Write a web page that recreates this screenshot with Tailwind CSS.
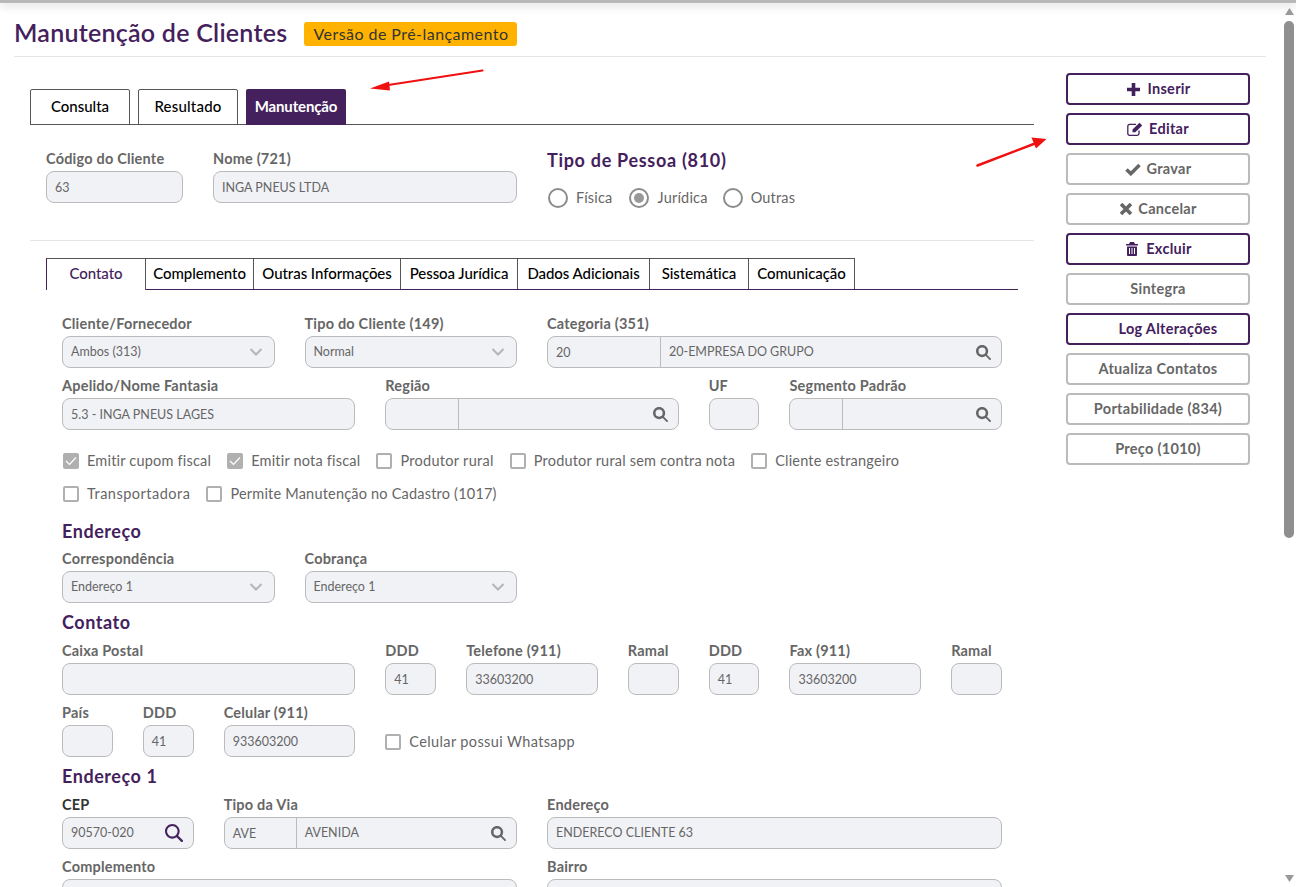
<!DOCTYPE html>
<html lang="pt-BR">
<head>
  <meta charset="UTF-8" />
  <meta name="viewport" content="width=device-width, initial-scale=1.0"/>
  <title>Manutenção de Clientes</title>
  <script src="https://cdn.jsdelivr.net/npm/@tailwindcss/browser@4"></script>
</head>
<body class="bg-white h-[887px] overflow-hidden flex relative [font-family:Lato,sans-serif] text-[#666]">

  <!-- top shadow -->
  <div class="absolute top-0 left-0 w-full h-[3px] bg-[#b8b8b8] shadow-[0_2px_10px_rgba(0,0,0,0.25)]"></div>

  <!-- annotation arrows -->
  <svg class="absolute top-0 left-0 pointer-events-none" width="1296" height="200" viewBox="0 0 1296 200">
    <path d="M482.500 70.500 L385 85.500" stroke="#f01010" stroke-width="2.200" stroke-linecap="round"/>
    <path d="M370 88.500 L389 81.500 L390 90.500 Z" fill="#f01010"/>
    <path d="M977.500 165.500 L1035 143.500" stroke="#f01010" stroke-width="2.500" stroke-linecap="round"/>
    <path d="M1046.500 139 L1031.500 137.500 L1036 148.500 Z" fill="#f01010"/>
  </svg>

  <div class="w-[1283px] shrink-0 pl-[14px] pr-[17px]">
    <!-- header -->
    <header class="h-[57px] border-b border-[#e4e4e4] flex items-center gap-[17px] pt-[10px]">
      <h1 class="text-[25px] leading-[32px] font-semibold text-[#44215c] tracking-[0.25px] -mt-[2px]">Manutenção de Clientes</h1>
      <span class="bg-[#ffb300] text-[#333] text-[16px] leading-[24px] h-[24px] w-[213px] mt-[2px] rounded-[3px] text-center tracking-[0.45px]">Versão de Pré-lançamento</span>
    </header>

    <div class="flex items-start">
      <!-- left column -->
      <div class="w-[1004px] ml-[16px] pt-[32px]">
        <nav class="flex gap-[8px] h-[36px] border-b border-[#555]">
          <a class="w-[100px] h-[36px] border border-[#555] rounded-t-[2px] flex items-center justify-center pb-[2px] text-[15px] font-medium text-black">Consulta</a>
          <a class="w-[100px] h-[36px] border border-[#555] rounded-t-[2px] flex items-center justify-center pb-[2px] text-[15px] font-medium text-black tracking-[0.2px]">Resultado</a>
          <a class="w-[100px] h-[36px] bg-[#44215c] rounded-t-[2px] flex items-center justify-center pb-[2px] text-[15px] font-bold text-white tracking-[-0.15px]">Manutenção</a>
        </nav>

        <section class="h-[116px] border-b border-[#e4e4e4] pl-[16px] pt-[23px] flex gap-[30px]">
          <div class="w-[137px]">
            <label class="block h-[20px] pt-[1px] leading-[20px] mb-[3px] text-[14.500px] font-bold tracking-[0.2px] whitespace-nowrap">Código do Cliente</label>
            <div class="h-[32px] border border-[#bbb] rounded-[8px] bg-[#f1f2f6] px-[8px] text-[12.500px] leading-[31px]">63</div>
          </div>
          <div class="w-[304px]">
            <label class="block h-[20px] pt-[1px] leading-[20px] mb-[3px] text-[14.500px] font-bold tracking-[0.2px]">Nome (721)</label>
            <div class="h-[32px] border border-[#bbb] rounded-[8px] bg-[#f1f2f6] px-[8px] text-[12.500px] leading-[31px]">INGA PNEUS LTDA</div>
          </div>
          <div>
            <h3 class="text-[18px] leading-[24px] font-bold text-[#44215c] tracking-[0.7px]">Tipo de Pessoa (810)</h3>
            <div class="flex items-center mt-[14px] h-[24px] text-[14.500px] tracking-[0.2px]">
              <span class="w-[20px] h-[20px] rounded-full border-2 border-[#8c8c8c] ml-[1px]"></span>
              <span class="ml-[8px]">Física</span>
              <span class="w-[20px] h-[20px] rounded-full border-2 border-[#8c8c8c] ml-[16px] flex items-center justify-center"><span class="w-[10px] h-[10px] rounded-full bg-[#999]"></span></span>
              <span class="ml-[9px]">Jurídica</span>
              <span class="w-[20px] h-[20px] rounded-full border-2 border-[#8c8c8c] ml-[15px]"></span>
              <span class="ml-[8px]">Outras</span>
            </div>
          </div>
        </section>

        <!-- inner tabs -->
        <div class="ml-[16px] w-[972px] mt-[17px]">
          <nav class="flex h-[32px] border-b border-[#44215c] text-[15px] font-medium text-black tracking-[-0.05px]">
            <a class="w-[100px] h-[32px] pb-[2px] border-t border-l border-r border-[#555] border-l-[#44215c] bg-white flex items-center justify-center text-[#44215c]">Contato</a>
            <a class="w-[108px] h-[31px] pb-[1px] border-t border-r border-[#555] flex items-center justify-center whitespace-nowrap">Complemento</a>
            <a class="w-[147px] h-[31px] pb-[1px] border-t border-r border-[#555] flex items-center justify-center whitespace-nowrap">Outras Informações</a>
            <a class="w-[117px] h-[31px] pb-[1px] border-t border-r border-[#555] flex items-center justify-center whitespace-nowrap">Pessoa Jurídica</a>
            <a class="w-[132px] h-[31px] pb-[1px] border-t border-r border-[#555] flex items-center justify-center whitespace-nowrap">Dados Adicionais</a>
            <a class="w-[99px] h-[31px] pb-[1px] border-t border-r border-[#555] flex items-center justify-center whitespace-nowrap">Sistemática</a>
            <a class="w-[106px] h-[31px] pb-[1px] border-t border-r border-[#555] flex items-center justify-center whitespace-nowrap">Comunicação</a>
          </nav>

          <div class="pl-[16px] w-[956px] pt-[23px]">
            <div class="grid grid-cols-12 gap-x-[30px] gap-y-[7px] w-[940px]">
              <div class="col-span-3">
                <label class="block h-[20px] pt-[1px] leading-[20px] mb-[3px] text-[14.500px] font-bold tracking-[0.2px] whitespace-nowrap">Cliente/Fornecedor</label>
                <div class="h-[32px] border border-[#bbb] rounded-[8px] bg-[#f1f2f6] pl-[8px] pr-[11px] text-[12.500px] flex items-center justify-between">Ambos (313)<svg width="14" height="8" viewBox="0 0 14 8" fill="none" stroke="#b5b5b5" stroke-width="2"><path d="M1.500 1 7 6.500 12.500 1"/></svg></div>
              </div>
              <div class="col-span-3">
                <label class="block h-[20px] pt-[1px] leading-[20px] mb-[3px] text-[14.500px] font-bold tracking-[0.2px] whitespace-nowrap">Tipo do Cliente (149)</label>
                <div class="h-[32px] border border-[#bbb] rounded-[8px] bg-[#f1f2f6] pl-[8px] pr-[11px] text-[12.500px] flex items-center justify-between">Normal<svg width="14" height="8" viewBox="0 0 14 8" fill="none" stroke="#b5b5b5" stroke-width="2"><path d="M1.500 1 7 6.500 12.500 1"/></svg></div>
              </div>
              <div class="col-span-6">
                <label class="block h-[20px] pt-[1px] leading-[20px] mb-[3px] text-[14.500px] font-bold tracking-[0.2px]">Categoria (351)</label>
                <div class="h-[32px] border border-[#bbb] rounded-[8px] bg-[#f1f2f6] text-[12.500px] flex items-center">
                  <span class="w-[113px] h-full border-r border-[#bbb] pl-[8px] leading-[31px]">20</span>
                  <span class="flex-1 pl-[8px]">20-EMPRESA DO GRUPO</span>
                  <svg class="mr-[10px]" width="15" height="15" viewBox="0 0 512 512" fill="#666"><path d="M416 208c0 45.900-14.900 88.300-40 122.700L502.600 457.400c12.500 12.500 12.500 32.800 0 45.300s-32.800 12.500-45.300 0L330.700 376c-34.400 25.200-76.800 40-122.700 40C93.100 416 0 322.900 0 208S93.100 0 208 0S416 93.100 416 208zM208 330a122 122 0 1 0 0-244 122 122 0 1 0 0 244z"/></svg>
                </div>
              </div>

              <div class="col-span-4">
                <label class="block h-[20px] pt-[1px] leading-[20px] mb-[3px] text-[14.500px] font-bold tracking-[0.2px]">Apelido/Nome Fantasia</label>
                <div class="h-[32px] border border-[#bbb] rounded-[8px] bg-[#f1f2f6] px-[8px] text-[12.500px] leading-[31px]">5.3 - INGA PNEUS LAGES</div>
              </div>
              <div class="col-span-4">
                <label class="block h-[20px] pt-[1px] leading-[20px] mb-[3px] text-[14.500px] font-bold tracking-[0.2px]">Região</label>
                <div class="h-[32px] border border-[#bbb] rounded-[8px] bg-[#f1f2f6] flex items-center">
                  <span class="w-[73px] h-full border-r border-[#bbb]"></span>
                  <span class="flex-1"></span>
                  <svg class="mr-[10px]" width="15" height="15" viewBox="0 0 512 512" fill="#666"><path d="M416 208c0 45.900-14.900 88.300-40 122.700L502.600 457.400c12.500 12.500 12.500 32.800 0 45.300s-32.800 12.500-45.300 0L330.700 376c-34.400 25.200-76.800 40-122.700 40C93.100 416 0 322.900 0 208S93.100 0 208 0S416 93.100 416 208zM208 330a122 122 0 1 0 0-244 122 122 0 1 0 0 244z"/></svg>
                </div>
              </div>
              <div class="col-span-1">
                <label class="block h-[20px] pt-[1px] leading-[20px] mb-[3px] text-[14.500px] font-bold tracking-[0.2px]">UF</label>
                <div class="h-[32px] border border-[#bbb] rounded-[8px] bg-[#f1f2f6]"></div>
              </div>
              <div class="col-span-3">
                <label class="block h-[20px] pt-[1px] leading-[20px] mb-[3px] text-[14.500px] font-bold tracking-[0.2px] whitespace-nowrap">Segmento Padrão</label>
                <div class="h-[32px] border border-[#bbb] rounded-[8px] bg-[#f1f2f6] flex items-center">
                  <span class="w-[53px] h-full border-r border-[#bbb]"></span>
                  <span class="flex-1"></span>
                  <svg class="mr-[10px]" width="15" height="15" viewBox="0 0 512 512" fill="#666"><path d="M416 208c0 45.900-14.900 88.300-40 122.700L502.600 457.400c12.500 12.500 12.500 32.800 0 45.300s-32.800 12.500-45.300 0L330.700 376c-34.400 25.200-76.800 40-122.700 40C93.100 416 0 322.900 0 208S93.100 0 208 0S416 93.100 416 208zM208 330a122 122 0 1 0 0-244 122 122 0 1 0 0 244z"/></svg>
                </div>
              </div>
            </div>

            <!-- checkboxes -->
            <div class="mt-[21px] pl-[1px] text-[14.500px] tracking-[0.2px]">
              <div class="flex items-center h-[20px] gap-[16px]">
                <span class="flex items-center gap-[8px]"><span class="w-[16px] h-[16px] rounded-[2px] bg-[#b0b0b0] flex items-center justify-center"><svg width="12" height="10" viewBox="0 0 12 10" fill="none" stroke="#fff" stroke-width="1.200"><path d="M1 5l3.500 3.500L11 1.500"/></svg></span>Emitir cupom fiscal</span>
                <span class="flex items-center gap-[8px]"><span class="w-[16px] h-[16px] rounded-[2px] bg-[#b0b0b0] flex items-center justify-center"><svg width="12" height="10" viewBox="0 0 12 10" fill="none" stroke="#fff" stroke-width="1.200"><path d="M1 5l3.500 3.500L11 1.500"/></svg></span>Emitir nota fiscal</span>
                <span class="flex items-center gap-[8px] tracking-[0.3px]"><span class="w-[16px] h-[16px] rounded-[2px] border-2 border-[#b0b0b0]"></span>Produtor rural</span>
                <span class="flex items-center gap-[8px]"><span class="w-[16px] h-[16px] rounded-[2px] border-2 border-[#b0b0b0]"></span>Produtor rural sem contra nota</span>
                <span class="flex items-center gap-[8px]"><span class="w-[16px] h-[16px] rounded-[2px] border-2 border-[#b0b0b0]"></span>Cliente estrangeiro</span>
              </div>
              <div class="flex items-center h-[20px] gap-[16px] mt-[13px]">
                <span class="flex items-center gap-[8px] tracking-[0.5px]"><span class="w-[16px] h-[16px] rounded-[2px] border-2 border-[#b0b0b0]"></span>Transportadora</span>
                <span class="flex items-center gap-[8px]"><span class="w-[16px] h-[16px] rounded-[2px] border-2 border-[#b0b0b0]"></span>Permite Manutenção no Cadastro (1017)</span>
              </div>
            </div>

            <!-- Endereço -->
            <h3 class="mt-[17px] h-[20px] leading-[20px] text-[18px] font-bold text-[#44215c] tracking-[0.55px]">Endereço</h3>
            <div class="grid grid-cols-12 gap-x-[30px] w-[940px] mt-[7px]">
              <div class="col-span-3">
                <label class="block h-[20px] pt-[1px] leading-[20px] mb-[3px] text-[14.500px] font-bold tracking-[0.2px]">Correspondência</label>
                <div class="h-[32px] border border-[#bbb] rounded-[8px] bg-[#f1f2f6] pl-[8px] pr-[11px] text-[12.500px] flex items-center justify-between">Endereço 1<svg width="14" height="8" viewBox="0 0 14 8" fill="none" stroke="#b5b5b5" stroke-width="2"><path d="M1.500 1 7 6.500 12.500 1"/></svg></div>
              </div>
              <div class="col-span-3">
                <label class="block h-[20px] pt-[1px] leading-[20px] mb-[3px] text-[14.500px] font-bold tracking-[0.2px]">Cobrança</label>
                <div class="h-[32px] border border-[#bbb] rounded-[8px] bg-[#f1f2f6] pl-[8px] pr-[11px] text-[12.500px] flex items-center justify-between">Endereço 1<svg width="14" height="8" viewBox="0 0 14 8" fill="none" stroke="#b5b5b5" stroke-width="2"><path d="M1.500 1 7 6.500 12.500 1"/></svg></div>
              </div>
            </div>

            <!-- Contato -->
            <h3 class="mt-[9px] h-[20px] leading-[20px] text-[18px] font-bold text-[#44215c] tracking-[0.55px]">Contato</h3>
            <div class="grid grid-cols-12 gap-x-[30px] gap-y-[7px] w-[940px] mt-[8px]">
              <div class="col-span-4">
                <label class="block h-[20px] pt-[1px] leading-[20px] mb-[3px] text-[14.500px] font-bold tracking-[0.2px]">Caixa Postal</label>
                <div class="h-[32px] border border-[#bbb] rounded-[8px] bg-[#f1f2f6]"></div>
              </div>
              <div class="col-span-1">
                <label class="block h-[20px] pt-[1px] leading-[20px] mb-[3px] text-[14.500px] font-bold tracking-[0.2px]">DDD</label>
                <div class="h-[32px] border border-[#bbb] rounded-[8px] bg-[#f1f2f6] px-[8px] text-[12.500px] leading-[31px]">41</div>
              </div>
              <div class="col-span-2">
                <label class="block h-[20px] pt-[1px] leading-[20px] mb-[3px] text-[14.500px] font-bold tracking-[0.2px]">Telefone (911)</label>
                <div class="h-[32px] border border-[#bbb] rounded-[8px] bg-[#f1f2f6] px-[8px] text-[12.500px] leading-[31px]">33603200</div>
              </div>
              <div class="col-span-1">
                <label class="block h-[20px] pt-[1px] leading-[20px] mb-[3px] text-[14.500px] font-bold tracking-[0.2px]">Ramal</label>
                <div class="h-[32px] border border-[#bbb] rounded-[8px] bg-[#f1f2f6]"></div>
              </div>
              <div class="col-span-1">
                <label class="block h-[20px] pt-[1px] leading-[20px] mb-[3px] text-[14.500px] font-bold tracking-[0.2px]">DDD</label>
                <div class="h-[32px] border border-[#bbb] rounded-[8px] bg-[#f1f2f6] px-[8px] text-[12.500px] leading-[31px]">41</div>
              </div>
              <div class="col-span-2">
                <label class="block h-[20px] pt-[1px] leading-[20px] mb-[3px] text-[14.500px] font-bold tracking-[0.2px]">Fax (911)</label>
                <div class="h-[32px] border border-[#bbb] rounded-[8px] bg-[#f1f2f6] px-[8px] text-[12.500px] leading-[31px]">33603200</div>
              </div>
              <div class="col-span-1">
                <label class="block h-[20px] pt-[1px] leading-[20px] mb-[3px] text-[14.500px] font-bold tracking-[0.2px]">Ramal</label>
                <div class="h-[32px] border border-[#bbb] rounded-[8px] bg-[#f1f2f6]"></div>
              </div>

              <div class="col-span-1">
                <label class="block h-[20px] pt-[1px] leading-[20px] mb-[3px] text-[14.500px] font-bold tracking-[0.2px]">País</label>
                <div class="h-[32px] border border-[#bbb] rounded-[8px] bg-[#f1f2f6]"></div>
              </div>
              <div class="col-span-1">
                <label class="block h-[20px] pt-[1px] leading-[20px] mb-[3px] text-[14.500px] font-bold tracking-[0.2px]">DDD</label>
                <div class="h-[32px] border border-[#bbb] rounded-[8px] bg-[#f1f2f6] px-[8px] text-[12.500px] leading-[31px]">41</div>
              </div>
              <div class="col-span-2">
                <label class="block h-[20px] pt-[1px] leading-[20px] mb-[3px] text-[14.500px] font-bold tracking-[0.2px]">Celular (911)</label>
                <div class="h-[32px] border border-[#bbb] rounded-[8px] bg-[#f1f2f6] px-[8px] text-[12.500px] leading-[31px]">933603200</div>
              </div>
              <div class="col-span-8 flex items-center gap-[8px] pt-[25px] text-[14.500px] tracking-[0.37px]">
                <span class="w-[16px] h-[16px] rounded-[2px] border-2 border-[#b0b0b0]"></span>Celular possui Whatsapp
              </div>
            </div>

            <!-- Endereço 1 -->
            <h3 class="mt-[9px] h-[20px] leading-[20px] text-[18px] font-bold text-[#44215c] tracking-[0.55px]">Endereço 1</h3>
            <div class="grid grid-cols-12 gap-x-[30px] gap-y-[7px] w-[940px] mt-[8px]">
              <div class="col-span-2">
                <label class="block h-[20px] pt-[1px] leading-[20px] mb-[3px] text-[14.500px] font-bold tracking-[0.2px] text-[#333]">CEP</label>
                <div class="h-[32px] border border-[#bbb] rounded-[8px] bg-[#f1f2f6] pl-[8px] pr-[10px] text-[12.500px] flex items-center justify-between">90570-020
                  <svg width="18" height="18" viewBox="0 0 512 512" fill="#44215c"><path d="M416 208c0 45.900-14.900 88.300-40 122.700L502.600 457.400c12.500 12.500 12.500 32.800 0 45.300s-32.800 12.500-45.300 0L330.700 376c-34.400 25.200-76.800 40-122.700 40C93.100 416 0 322.900 0 208S93.100 0 208 0S416 93.100 416 208zM208 358a150 150 0 1 0 0-300 150 150 0 1 0 0 300z"/></svg>
                </div>
              </div>
              <div class="col-span-4">
                <label class="block h-[20px] pt-[1px] leading-[20px] mb-[3px] text-[14.500px] font-bold tracking-[0.2px]">Tipo da Via</label>
                <div class="h-[32px] border border-[#bbb] rounded-[8px] bg-[#f1f2f6] text-[12.500px] flex items-center">
                  <span class="w-[72px] h-full border-r border-[#bbb] pl-[8px] leading-[31px]">AVE</span>
                  <span class="flex-1 pl-[8px]">AVENIDA</span>
                  <svg class="mr-[10px]" width="15" height="15" viewBox="0 0 512 512" fill="#666"><path d="M416 208c0 45.900-14.900 88.300-40 122.700L502.600 457.400c12.500 12.500 12.500 32.800 0 45.300s-32.800 12.500-45.300 0L330.700 376c-34.400 25.200-76.800 40-122.700 40C93.100 416 0 322.900 0 208S93.100 0 208 0S416 93.100 416 208zM208 330a122 122 0 1 0 0-244 122 122 0 1 0 0 244z"/></svg>
                </div>
              </div>
              <div class="col-span-6">
                <label class="block h-[20px] pt-[1px] leading-[20px] mb-[3px] text-[14.500px] font-bold tracking-[0.2px]">Endereço</label>
                <div class="h-[32px] border border-[#bbb] rounded-[8px] bg-[#f1f2f6] px-[8px] text-[12.500px] leading-[30px]">ENDERECO CLIENTE 63</div>
              </div>
              <div class="col-span-6">
                <label class="block h-[20px] pt-[1px] leading-[20px] mb-[3px] text-[14.500px] font-bold tracking-[0.2px]">Complemento</label>
                <div class="h-[32px] border border-[#bbb] rounded-[8px] bg-[#f1f2f6]"></div>
              </div>
              <div class="col-span-6">
                <label class="block h-[20px] pt-[1px] leading-[20px] mb-[3px] text-[14.500px] font-bold tracking-[0.2px]">Bairro</label>
                <div class="h-[32px] border border-[#bbb] rounded-[8px] bg-[#f1f2f6]"></div>
              </div>
            </div>
          </div>
        </div>
      </div>

      <!-- action buttons -->
      <aside class="w-[184px] ml-[32px] pt-[16px] flex flex-col gap-[8px] text-[14.500px] font-bold tracking-[0.3px]">
        <button class="h-[32px] border-2 border-[#44215c] rounded-[4px] text-[#44215c] flex items-center justify-center gap-[7px] pl-[2px]">
          <svg width="13" height="13" viewBox="0 0 13 13" fill="#44215c"><path d="M4.700 0h3.600v4.700H13v3.600H8.300V13H4.700V8.300H0V4.700h4.700z"/></svg>Inserir</button>
        <button class="h-[32px] border-2 border-[#44215c] rounded-[4px] text-[#44215c] flex items-center justify-center gap-[6px]">
          <svg width="16" height="14" viewBox="0 0 16 14" fill="none"><path d="M12 8.500v3a1.800 1.800 0 0 1-1.800 1.800H2.600A1.800 1.800 0 0 1 .8 11.500V4.200a1.800 1.800 0 0 1 1.800-1.800H9" stroke="#44215c" stroke-width="1.300"/><path d="M5.500 7.500 12.500.8l2.700 2.700L8.300 10.300H5.500z" fill="#44215c"/></svg>Editar</button>
        <button class="h-[32px] border-2 border-[#bbb] rounded-[4px] flex items-center justify-center gap-[6px]">
          <svg width="16" height="13" viewBox="0 0 16 13" fill="none" stroke="#666" stroke-width="3.500"><path d="M1.500 6.500l4.300 4.200L14.500 2"/></svg>Gravar</button>
        <button class="h-[32px] border-2 border-[#bbb] rounded-[4px] flex items-center justify-center gap-[6px] pl-[1px]">
          <svg width="12" height="12" viewBox="0 0 12 12" fill="none" stroke="#666" stroke-width="3.600"><path d="M1 1l10 10M11 1L1 11"/></svg>Cancelar</button>
        <button class="h-[32px] border-2 border-[#44215c] rounded-[4px] text-[#44215c] flex items-center justify-center gap-[8px] pl-[2px]">
          <svg width="12" height="14" viewBox="0 0 12 14" fill="#44215c"><path d="M4 0h4l1 2h3v1.500H0V2h3zM1 4.500h10V13a1 1 0 0 1-1 1H2a1 1 0 0 1-1-1zM3 6v6h1V6zm2.500 0v6h1V6zM8 6v6h1V6z" fill-rule="evenodd"/></svg>Excluir</button>
        <button class="h-[32px] border-2 border-[#bbb] rounded-[4px]">Sintegra</button>
        <button class="h-[32px] border-2 border-[#44215c] rounded-[4px] text-[#44215c] pl-[20px]">Log Alterações</button>
        <button class="h-[32px] border-2 border-[#bbb] rounded-[4px]">Atualiza Contatos</button>
        <button class="h-[32px] border-2 border-[#bbb] rounded-[4px]">Portabilidade (834)</button>
        <button class="h-[32px] border-2 border-[#bbb] rounded-[4px]">Preço (1010)</button>
      </aside>
    </div>
  </div>

  <!-- scrollbar -->
  <div class="w-[13px] shrink-0 relative flex flex-col items-start pl-[1px] pt-[8px]">
    <svg class="ml-[.5px]" width="9" height="7" viewBox="0 0 9 7" fill="#999"><path d="M4.500 0 9 7H0z"/></svg>
    <div class="w-[10px] h-[517px] mt-[6px] rounded-[5px] bg-[#8f8f8f]"></div>
    <svg class="absolute bottom-[5px] left-[1.500px]" width="9" height="7" viewBox="0 0 9 7" fill="#999"><path d="M0 0h9L4.500 7z"/></svg>
  </div>
</body>
</html>
